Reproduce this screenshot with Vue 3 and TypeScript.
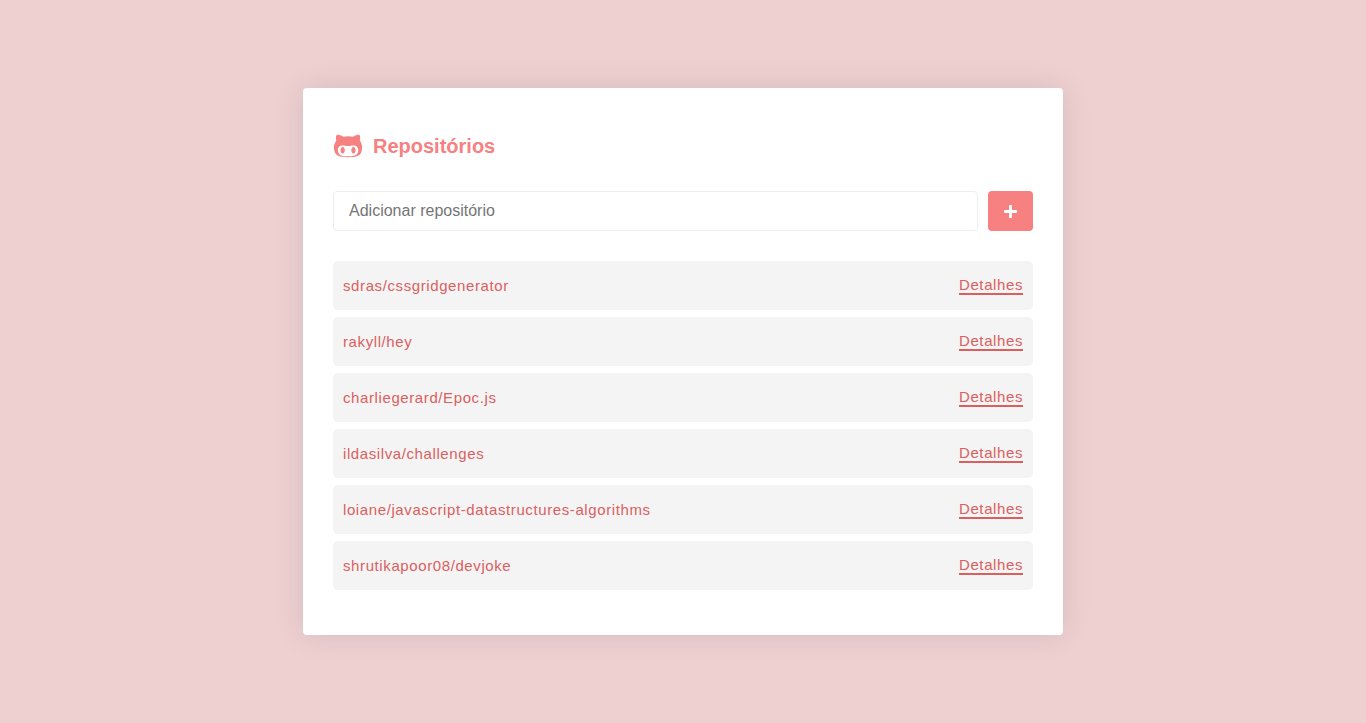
<script setup lang="ts">
import { ref } from 'vue'

const newRepo = ref('')
const repositories = ref<string[]>([
  'sdras/cssgridgenerator',
  'rakyll/hey',
  'charliegerard/Epoc.js',
  'ildasilva/challenges',
  'loiane/javascript-datastructures-algorithms',
  'shrutikapoor08/devjoke',
])

function addRepository(): void {
  const name = newRepo.value.trim()
  if (!name || repositories.value.includes(name)) return
  repositories.value.push(name)
  newRepo.value = ''
}
</script>

<template>
  <div class="page">
    <main class="card">
      <h1 class="title">
        <svg class="title-icon" viewBox="0 0 480 512" aria-hidden="true">
          <path
            d="M186.1 328.7c0 20.9-10.9 55.1-36.7 55.1s-36.7-34.2-36.7-55.1 10.9-55.1 36.7-55.1 36.7 34.2 36.7 55.1zM480 278.2c0 31.9-3.2 65.7-17.5 95-37.9 76.6-142.1 74.8-216.7 74.8-75.8 0-186.2 2.7-225.6-74.8-14.6-29-20.2-63.1-20.2-95 0-41.9 13.9-81.5 41.5-113.6-5.2-15.8-7.7-32.4-7.7-48.8 0-21.5 4.9-32.3 14.6-51.8 45.3 0 74.3 9 108.8 36 29-6.9 58.8-10 88.7-10 27 0 54.2 2.9 80.4 9.2 34-26.7 63-35.2 107.8-35.2 9.8 19.5 14.6 30.3 14.6 51.8 0 16.4-2.6 32.7-7.7 48.2 27.5 32.4 39 72.3 39 114.2zm-64.3 50.5c0-43.9-26.7-82.6-73.5-82.6-18.9 0-37 3.4-56 6-14.9 2.3-29.8 3.2-45.1 3.2-15.2 0-30.1-.9-45.1-3.2-18.7-2.6-37-6-56-6-46.8 0-73.5 38.7-73.5 82.6 0 87.8 80.4 101.3 150.4 101.3h48.2c70.3 0 150.6-13.4 150.6-101.3zm-82.6-55.1c-25.8 0-36.7 34.2-36.7 55.1s10.9 55.1 36.7 55.1 36.7-34.2 36.7-55.1-10.9-55.1-36.7-55.1z"
          />
        </svg>
        Repositórios
      </h1>

      <form class="form" @submit.prevent="addRepository">
        <input
          v-model="newRepo"
          class="field"
          type="text"
          placeholder="Adicionar repositório"
          aria-label="Adicionar repositório"
        />
        <button class="add" type="submit" aria-label="Adicionar">
          <svg class="add-icon" viewBox="0 0 448 512" aria-hidden="true">
            <path
              d="M416 208H272V64c0-17.67-14.33-32-32-32h-32c-17.67 0-32 14.33-32 32v144H32c-17.67 0-32 14.33-32 32v32c0 17.67 14.33 32 32 32h144v144c0 17.67 14.33 32 32 32h32c17.67 0 32-14.33 32-32V304h144c17.67 0 32-14.33 32-32v-32c0-17.67-14.33-32-32-32z"
            />
          </svg>
        </button>
      </form>

      <ul class="list">
        <li v-for="repo in repositories" :key="repo" class="row">
          <span>{{ repo }}</span>
          <a class="details" :href="`#/repository/${encodeURIComponent(repo)}`">Detalhes</a>
        </li>
      </ul>
    </main>
  </div>
</template>

<style>
body {
  margin: 0;
  background: #eed0d1;
}
</style>

<style scoped>
.page {
  display: flex;
  align-items: center;
  justify-content: center;
  min-height: 100vh;
  font-family: 'Liberation Sans', Arial, Helvetica, sans-serif;
}

.card {
  box-sizing: border-box;
  width: 100%;
  max-width: 760px;
  padding: 43px 30px 45px;
  border-radius: 4px;
  background: #fff;
  box-shadow: 0 0 30px rgba(0, 0, 0, 0.1);
}

.title {
  display: flex;
  align-items: center;
  gap: 10px;
  margin: 0;
  color: #f78080;
  font-size: 20px;
  line-height: 24px;
}

.title-icon {
  width: 30px;
  height: 30px;
  fill: currentColor;
}

.form {
  display: flex;
  gap: 10px;
  margin-top: 30px;
}

.field {
  box-sizing: border-box;
  flex: 1;
  min-width: 0;
  height: 40px;
  padding: 0 15px;
  border: 1px solid #eee;
  border-radius: 4px;
  background: #fff;
  color: #444;
  font-family: inherit;
  font-size: 16px;
}

.field::placeholder {
  color: #757575;
}

.add {
  display: flex;
  align-items: center;
  justify-content: center;
  padding: 0 15px;
  border: 0;
  border-radius: 4px;
  background: #f78080;
  color: #fff;
  cursor: pointer;
}

.add-icon {
  width: 15px;
  height: 15px;
  fill: currentColor;
}

.list {
  display: flex;
  flex-direction: column;
  gap: 7px;
  margin: 30px 0 0;
  padding: 0;
  list-style: none;
}

.row {
  display: flex;
  align-items: center;
  justify-content: space-between;
  padding: 15px 10px;
  border-radius: 5px;
  background: #f4f4f4;
  color: #db5f5f;
  font-size: 15px;
  line-height: 17px;
  letter-spacing: 0.04em;
}

.details {
  border-bottom: 2px solid #db5f5f;
  color: inherit;
  text-decoration: none;
}
</style>
